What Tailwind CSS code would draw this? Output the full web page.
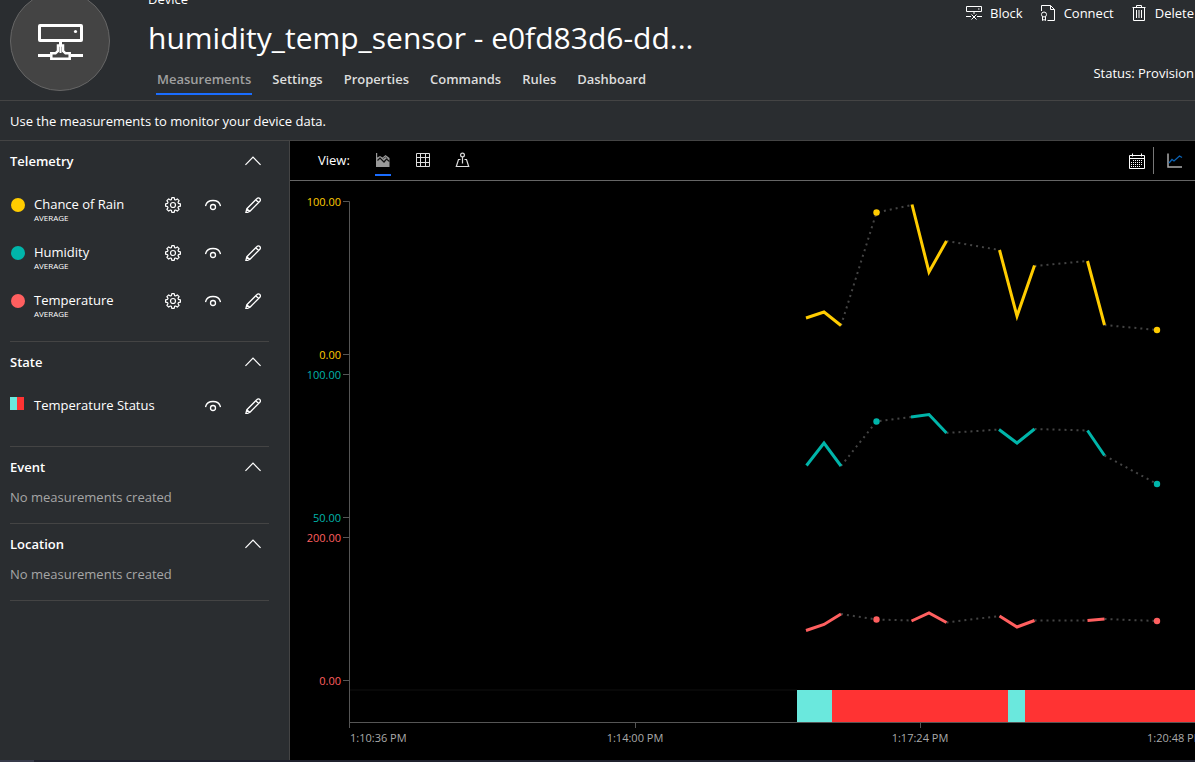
<!DOCTYPE html>
<html lang="en">
<head>
<meta charset="utf-8">
<meta name="viewport" content="width=device-width, initial-scale=1">
<title>Device measurements</title>
<script src="https://cdn.jsdelivr.net/npm/@tailwindcss/browser@4"></script>
</head>
<body class="flex min-h-screen flex-col overflow-x-hidden bg-[#2a2d30] font-['Open_Sans','Noto_Sans',sans-serif] text-[13px] leading-5 text-white">

<svg class="hidden" aria-hidden="true">
  <symbol id="gear" viewBox="0 0 16 16"><path fill="none" stroke="currentColor" stroke-width="1.2" stroke-linejoin="round" d="M6.800 .6h2.400l.4 2 1 .4 1.700-1.100 1.800 1.800L13 5.400l.4 1 2 .4v2.400l-2 .4-.4 1 1.100 1.700-1.800 1.800-1.700-1.100-1 .4-.4 2H6.800l-.4-2-1-.4-1.700 1.100-1.800-1.800L3 10.600l-.4-1-2-.4V6.800l2-.4.4-1-1.100-1.700 1.800-1.800L5.400 3l1-.4z"/><circle cx="8" cy="8" r="2.500" fill="none" stroke="currentColor" stroke-width="1.2"/></symbol>
  <symbol id="eye" viewBox="0 0 16 16"><path fill="none" stroke="currentColor" stroke-width="1.3" d="M.5 9C1.300 5.500 4.500 3.500 8 3.500s6.700 2 7.500 5.500"/><circle cx="8" cy="10" r="2.500" fill="none" stroke="currentColor" stroke-width="1.3"/></symbol>
  <symbol id="pencil" viewBox="0 0 16 16"><path fill="none" stroke="currentColor" stroke-width="1.3" stroke-linejoin="round" d="M.8 16l1-4.300L12 1.500a1.900 1.900 0 0 1 2.800 0 1.900 1.900 0 0 1 0 2.800L4.700 14.500zM1.800 11.700l2.900 2.800M10.800 2.700l2.800 2.800"/></symbol>
  <symbol id="chevron" viewBox="0 0 16 16"><path fill="none" stroke="currentColor" stroke-width="1.3" d="M.4 11.900L8 4.100l7.600 7.800"/></symbol>
</svg>

<header class="flex h-[101px] items-end justify-between overflow-hidden border-b border-[#444] pl-2.5">
  <div class="flex items-end">
    <div class="mb-[9px] grid size-[100px] place-items-center rounded-full border border-[#666] bg-[#444]">
      <svg class="size-12" viewBox="0 0 48 48" fill="none" stroke="#fff" stroke-width="3" aria-hidden="true">
        <rect x="3.500" y="8.500" width="42" height="15" rx=".5"/><circle cx="39.500" cy="14.500" r="1.600" fill="#fff" stroke="none"/>
        <path d="M24.500 24v4M2 38.500h12M35 38.500h12"/>
        <path stroke-width="2.500" d="M15.300 41.700v-5.400h4.200l2.500-2.300v-5.500h5V34l2.500 2.300h4.200v5.400z"/>
        <path stroke-width="2" d="M24.500 28v8"/>
      </svg>
    </div>
    <div class="ml-[38px] pb-[5px]">
      <p class="leading-4">Device</p>
      <h1 class="mt-[11px] text-[30px] leading-10">humidity_temp_sensor - e0fd83d6-dd...</h1>
      <nav class="mt-[11px] flex gap-[19px] pl-2 font-semibold text-[#ddd]">
        <a href="#measurements" aria-current="page" class="border-b-2 border-[#1a6dff] px-px pb-1 text-[#a0a0a0]">Measurements</a>
        <a href="#settings" class="px-px">Settings</a>
        <a href="#properties" class="px-px">Properties</a>
        <a href="#commands" class="px-px">Commands</a>
        <a href="#rules" class="px-px">Rules</a>
        <a href="#dashboard" class="px-px">Dashboard</a>
      </nav>
    </div>
  </div>
  <div class="flex h-full flex-col items-end justify-between pt-[3px] pr-px pb-[17px]">
    <div class="flex gap-[17px]">
      <button class="flex items-center gap-2"><svg class="size-4" viewBox="0 0 16 16" fill="none" stroke="#fff" aria-hidden="true"><path d="M.5 1.500h15v5H.5zM8 7v2M0 11.500h5M11 11.500h5M5.500 9.500l5 5M10.500 9.500l-5 5"/><path d="M12 4h1.500"/></svg>Block</button>
      <button class="flex items-center gap-2"><svg class="size-4" viewBox="0 0 16 16" fill="none" stroke="#fff" aria-hidden="true"><path d="M1.500 6V.5h9l4 4v11h-7M10.500.5v4h4M2.500 12v3.500l1.500-1 1.500 1V12"/><circle cx="4" cy="9.500" r="2.500"/></svg>Connect</button>
      <button class="flex items-center gap-2"><svg class="size-4" viewBox="0 0 16 16" fill="none" stroke="#fff" aria-hidden="true"><path d="M1.500 2.500h13M5.500 2.500v-2h5v2M2.500 2.500v13h11v-13M5.500 5v8M8 5v8M10.500 5v8"/></svg>Delete</button>
    </div>
    <p>Status: Provision</p>
  </div>
</header>

<p class="flex h-10 items-center border-b border-[#444] px-2.5">Use the measurements to monitor your device data.</p>

<div class="flex flex-1">
  <aside class="w-[290px] shrink-0 border-r border-[#444] pr-5 pl-2.5">
    <section class="border-b border-[#444] pb-4">
      <div class="flex h-10 items-center justify-between pr-2"><h2 class="font-semibold">Telemetry</h2><button aria-label="Collapse Telemetry"><svg class="block size-4"><use href="#chevron"/></svg></button></div>
      <ul>
        <li class="flex h-12 items-start pr-2">
          <span class="mt-[17px] ml-px size-3.5 rounded-full bg-[#ffcc00]"></span>
          <div class="ml-[9px] flex-1 pt-[13px]"><p>Chance of Rain</p><p class="text-[8px] leading-2">AVERAGE</p></div>
          <div class="flex gap-6 pt-4"><button aria-label="Configure Chance of Rain"><svg class="block size-4"><use href="#gear"/></svg></button><button aria-label="Show Chance of Rain"><svg class="block size-4"><use href="#eye"/></svg></button><button aria-label="Edit Chance of Rain"><svg class="block size-4"><use href="#pencil"/></svg></button></div>
        </li>
        <li class="flex h-12 items-start pr-2">
          <span class="mt-[17px] ml-px size-3.5 rounded-full bg-[#00b5aa]"></span>
          <div class="ml-[9px] flex-1 pt-[13px]"><p>Humidity</p><p class="text-[8px] leading-2">AVERAGE</p></div>
          <div class="flex gap-6 pt-4"><button aria-label="Configure Humidity"><svg class="block size-4"><use href="#gear"/></svg></button><button aria-label="Show Humidity"><svg class="block size-4"><use href="#eye"/></svg></button><button aria-label="Edit Humidity"><svg class="block size-4"><use href="#pencil"/></svg></button></div>
        </li>
        <li class="flex h-12 items-start pr-2">
          <span class="mt-[17px] ml-px size-3.5 rounded-full bg-[#ff5f5f]"></span>
          <div class="ml-[9px] flex-1 pt-[13px]"><p>Temperature</p><p class="text-[8px] leading-2">AVERAGE</p></div>
          <div class="flex gap-6 pt-4"><button aria-label="Configure Temperature"><svg class="block size-4"><use href="#gear"/></svg></button><button aria-label="Show Temperature"><svg class="block size-4"><use href="#eye"/></svg></button><button aria-label="Edit Temperature"><svg class="block size-4"><use href="#pencil"/></svg></button></div>
        </li>
      </ul>
    </section>
    <section class="border-b border-[#444] pb-4">
      <div class="flex h-10 items-center justify-between pr-2"><h2 class="font-semibold">State</h2><button aria-label="Collapse State"><svg class="block size-4"><use href="#chevron"/></svg></button></div>
      <div class="flex h-12 items-start pr-2">
        <span class="mt-[15px] flex h-[13px] w-3.5"><span class="w-1/2 bg-[#6ae8dd]"></span><span class="w-1/2 bg-[#ff3333]"></span></span>
        <p class="ml-2.5 flex-1 pt-[13px]">Temperature Status</p>
        <div class="flex gap-6 pt-4"><button aria-label="Show Temperature Status"><svg class="block size-4"><use href="#eye"/></svg></button><button aria-label="Edit Temperature Status"><svg class="block size-4"><use href="#pencil"/></svg></button></div>
      </div>
    </section>
    <section class="border-b border-[#444] pb-4">
      <div class="flex h-10 items-center justify-between pr-2"><h2 class="font-semibold">Event</h2><button aria-label="Collapse Event"><svg class="block size-4"><use href="#chevron"/></svg></button></div>
      <p class="text-[#a6a6a6]">No measurements created</p>
    </section>
    <section class="border-b border-[#444] pb-4">
      <div class="flex h-10 items-center justify-between pr-2"><h2 class="font-semibold">Location</h2><button aria-label="Collapse Location"><svg class="block size-4"><use href="#chevron"/></svg></button></div>
      <p class="text-[#a6a6a6]">No measurements created</p>
    </section>
  </aside>

  <main class="min-w-0 flex-1 bg-black">
    <div class="flex h-10 items-center justify-between border-b border-[#666] pr-3 pl-7">
      <div class="flex h-full items-center pb-0.5">
        <span class="w-[57px]">View:</span>
        <div class="flex gap-6">
          <button aria-label="Chart view" class="border-y-2 border-t-transparent border-b-[#1a6dff] py-1.5"><svg class="block size-4" viewBox="0 0 16 16" aria-hidden="true"><path fill="#999" d="M1 1h1.200v4.500L5 4l2.500 1.500L10.500 3 14.500 6v9H1z"/><path fill="none" stroke="#111" stroke-width="1.200" d="M2.500 8.500L5 6l4 4 2.500-3 3 2.500"/><path fill="none" stroke="#444" d="M8 6.500L10.500 5l2 1.500"/></svg></button>
          <button aria-label="Table view"><svg class="block size-4" viewBox="0 0 16 16" fill="none" stroke="#ddd" aria-hidden="true"><path d="M1.500 1.500h13v13h-13zM1.500 5.500h13M1.500 10.500h13M5.500 1.500v13M10.500 1.500v13"/></svg></button>
          <button aria-label="Map view"><svg class="block size-4" viewBox="0 0 16 16" fill="none" stroke="#ddd" stroke-width="1.200" aria-hidden="true"><circle cx="7.500" cy="3" r="1.900"/><path d="M7.500 5v6.500M5.500 7.500h-2l-2.200 7h12.400l-2.200-7h-2"/></svg></button>
        </div>
      </div>
      <div class="flex items-center">
        <button aria-label="Choose time range"><svg class="block size-[18px]" viewBox="0 0 18 18" fill="none" stroke="#fff" aria-hidden="true"><path d="M1.500 3.500h15v13h-15zM1.500 6.500h15M4.500 1.500v3M13.500 1.500v3"/><path stroke-dasharray="1 1" d="M5 8.500h10M3 10.500h12M3 12.500h12M3 14.500h9"/></svg></button>
        <span class="mr-[13px] ml-[7px] h-[27px] w-px bg-[#777]"></span>
        <button aria-label="Chart options"><svg class="block size-4" viewBox="0 0 16 16" fill="none" aria-hidden="true"><path stroke="#aaa" stroke-width="1.500" d="M1 .5v13.500h14"/><path stroke="#0b63b5" stroke-width="1.300" d="M2 10l3-3.500 2 1.500L12.500 3 15 4.500"/></svg></button>
      </div>
    </div>

    <svg class="block h-auto w-full" viewBox="290 181 905 579" role="img" aria-label="Measurements over time">
      <g stroke="#555" fill="none">
        <path d="M343 201.500h6.500V728M343 354.500h6M343 374.500h6M343 517.500h6M343 537.500h6M343 680.500h6"/>
        <path stroke="#111" d="M350 690h447"/>
      </g>
      <path fill="#6ae8dd" d="M797 690h35v32h-35zM1008 690h17v32h-17z"/>
      <path fill="#ff3333" d="M832 690h176v32H832zM1025 690h170v32h-170z"/>
      <path stroke="#555" d="M349 722.500h846M635.500 723v5M920.500 723v5"/>

      <g fill="none" stroke="#444" stroke-width="2" stroke-dasharray="2 4">
        <path d="M841 325.500L876.500 212.500L912 205M946.500 241L999.500 250M1034.500 266L1087.500 261M1104.500 325L1157 330"/>
        <path d="M841 466L876.500 421.500L912 417M946.500 433L999.500 429.500M1034.500 429L1087.500 430.500M1104.500 455.500L1157 484"/>
        <path d="M841 614L876.500 619.500L912 620.500M946.500 622.500L999.500 616M1034.500 620.500H1087.500M1104.500 619L1157 621"/>
      </g>
      <g fill="none" stroke-width="3">
        <path stroke="#ffcc00" d="M806 318L824 312L841 325.500M912 204.500L929 272L946.500 241M999.500 250L1017 316L1034.500 265.500M1087.500 261L1104.500 325"/>
        <path stroke="#00b5aa" d="M806.500 465.500L824 443L841 466M911 417L929 414.500L946.500 433M999 429.500L1017 443L1034.500 429M1087.500 430.500L1104.500 455.500"/>
        <path stroke="#ff5f5f" d="M806 630.500L824 624.500L841 614M911.500 621L929 613L946.500 622.500M999.500 616L1017 627L1034.500 620.500M1087.500 620.500L1104.500 619"/>
      </g>
      <g fill="#ffcc00"><circle cx="876.500" cy="212.500" r="3.200"/><circle cx="1157" cy="330" r="3.200"/></g>
      <g fill="#00b5aa"><circle cx="876.500" cy="421.500" r="3.200"/><circle cx="1157" cy="484" r="3.200"/></g>
      <g fill="#ff5f5f"><circle cx="876.500" cy="619.500" r="3.200"/><circle cx="1157" cy="621" r="3.200"/></g>

      <g class="text-[11px]" text-anchor="end">
        <g fill="#ffcc00"><text x="341" y="206">100.00</text><text x="341" y="359">0.00</text></g>
        <g fill="#00b5aa"><text x="341" y="379">100.00</text><text x="341" y="522">50.00</text></g>
        <g fill="#ff5f5f"><text x="341" y="542">200.00</text><text x="341" y="685">0.00</text></g>
      </g>
      <g class="text-[11px]" fill="#aaa">
        <text x="350" y="742">1:10:36 PM</text>
        <text x="635" y="742" text-anchor="middle">1:14:00 PM</text>
        <text x="920" y="742" text-anchor="middle">1:17:24 PM</text>
        <text x="1147" y="742">1:20:48 PM</text>
      </g>
    </svg>
  </main>
</div>
<footer class="h-0.5 bg-[#20222e]"><div class="h-full w-[34px] bg-[#383b4b]"></div></footer>
</body>
</html>
